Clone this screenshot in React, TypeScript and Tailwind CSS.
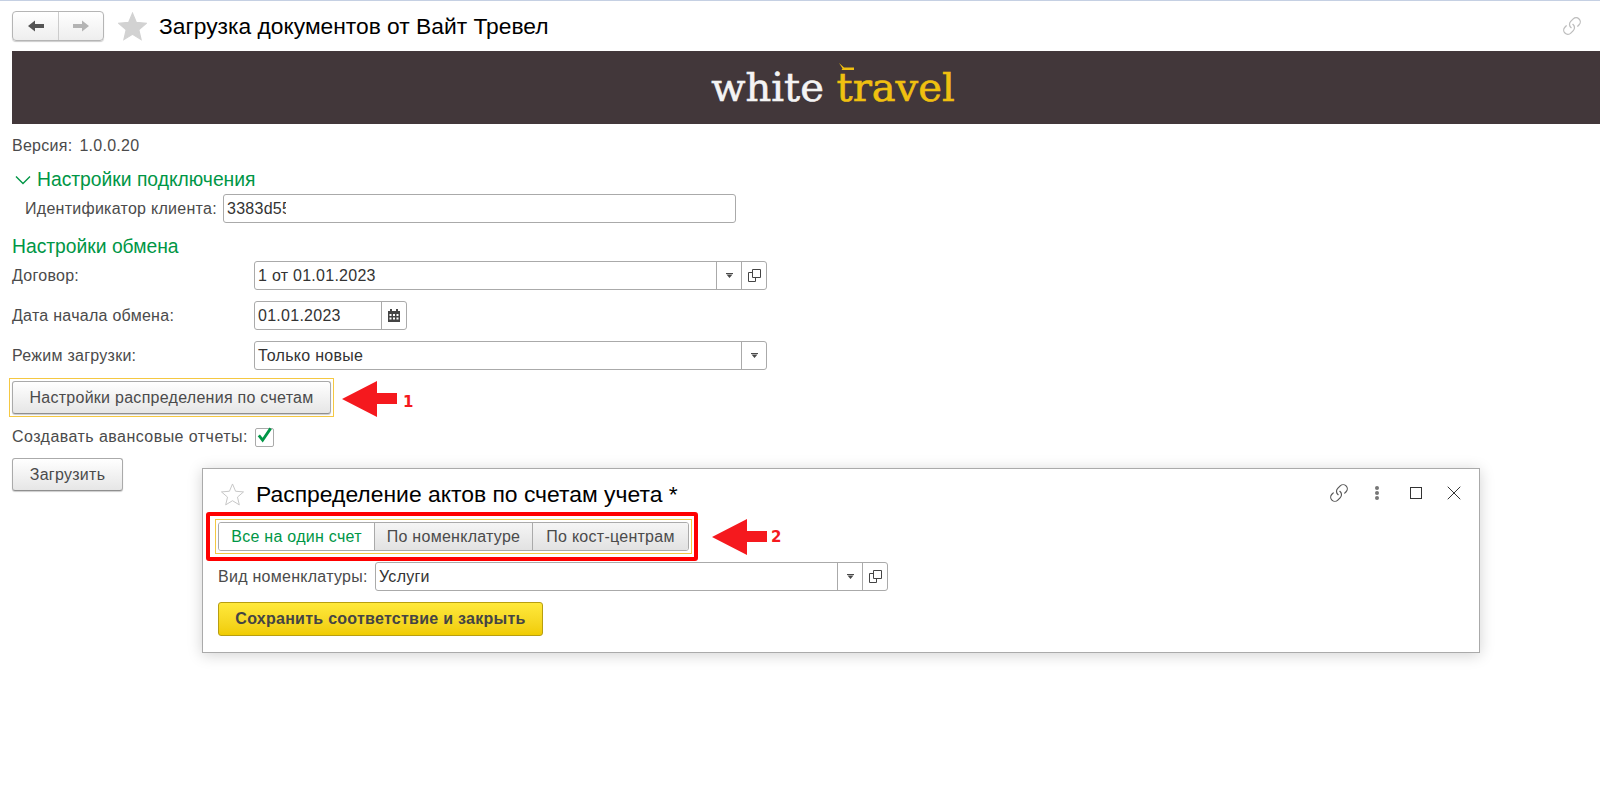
import { Link, X } from "lucide-react";

const font = { fontFamily: '"Liberation Sans", Arial, sans-serif' };

function Caret() {
  return (
    <svg width="7" height="6" viewBox="0 0 7 6">
      <path d="M0 0h7v1H0z M.5 1.5h6L3.5 5z" fill="#4a4a4a" />
    </svg>
  );
}

function CopyIcon() {
  return (
    <svg width="13" height="13" viewBox="0 0 13 13" fill="none" stroke="#444" strokeWidth="1">
      <path d="M4.5 .5h8v8h-8z" />
      <path d="M4.5 3.5H.5v9h7v-4" />
    </svg>
  );
}

function CalendarIcon() {
  return (
    <svg width="12" height="13" viewBox="0 0 12 13">
      <path d="M0 2h2V0h2v2h4V0h2v2h2v11H0z" fill="#444" />
      <path
        d="M1.5 5h2v2h-2z M5 5h2v2H5z M8.5 5h2v2h-2z M1.5 8.5h2v2h-2z M5 8.5h2v2H5z M8.5 8.5h2v2h-2z"
        fill="#fff"
      />
    </svg>
  );
}

function StarIcon({ size, filled }: { size: number; filled?: boolean }) {
  return (
    <svg width={size} height={size} viewBox="0 0 24 24">
      <path
        d="M12 1l3.2 7.6 8.3.7-6.3 5.4 1.9 8.1L12 18.5l-7.1 4.3 1.9-8.1L.5 9.3l8.3-.7z"
        fill={filled ? "#d2d2d2" : "#fff"}
        stroke={filled ? "#d2d2d2" : "#c4c4c4"}
        strokeWidth="1"
      />
    </svg>
  );
}

function BigArrow() {
  return (
    <svg width="55" height="36" viewBox="0 0 55 36" className="shrink-0">
      <path d="M0 18L35 0v12h20v11H35v13z" fill="#f5191e" />
    </svg>
  );
}

function FieldBtn({ children }: { children: React.ReactNode }) {
  return <span className="flex h-full w-[25px] items-center justify-center border-l border-[#aaaaaa]">{children}</span>;
}

function Field({ value, className, children }: { value: string; className: string; children?: React.ReactNode }) {
  return (
    <div className={`flex h-[29px] items-center rounded-[3px] border border-[#aaaaaa] bg-white ${className}`}>
      <span className="flex-1 overflow-hidden pl-[3px] text-[16px] tracking-[0.27px] whitespace-nowrap text-[#333]">{value}</span>
      {children}
    </div>
  );
}

function FormRow({ label, children }: { label: string; children: React.ReactNode }) {
  return (
    <div className="mb-[11px] flex items-center">
      <span className="w-[242px] pt-[1px] text-[16px] tracking-[0.27px] text-[#4b4b4b]">{label}</span>
      {children}
    </div>
  );
}

const grayBtn =
  "rounded-[3px] border border-[#aaaaaa] border-b-[#8f8f8f] bg-linear-to-b from-white to-[#e6e6e6] pt-[1px] text-[16px] tracking-[0.27px] text-[#4b4b4b] shadow-[0_1px_1px_rgba(0,0,0,0.2)]";

export default function App() {
  return (
    <div style={font} className="relative h-[800px] w-[1600px] overflow-hidden bg-white">
      <div className="h-[1px] bg-[#c5d0e3]" />

      <header className="flex h-[50px] items-center pr-[18px] pl-[12px]">
        <div className="flex h-[30px] w-[92px] rounded-[4px] border border-[#b5b5b5] bg-linear-to-b from-white to-[#eeeeee] shadow-[0_1px_1px_rgba(0,0,0,0.2)]">
          <span className="flex w-[46px] items-center justify-center border-r border-[#cccccc]">
            <svg width="16" height="12" viewBox="0 0 16 12">
              <path d="M0 6l7-5.5V4h9v4H7v3.5z" fill="#555" />
            </svg>
          </span>
          <span className="flex flex-1 items-center justify-center">
            <svg width="16" height="12" viewBox="0 0 16 12">
              <path d="M16 6L9 .5V4H0v4h9v3.5z" fill="#b4b4b4" />
            </svg>
          </span>
        </div>
        <span className="ml-[14px] flex w-[41px]">
          <StarIcon size={29} filled />
        </span>
        <h1 className="text-[22.8px] text-black">Загрузка документов от Вайт Тревел</h1>
        <Link size={20} strokeWidth={1.5} className="ml-auto text-[#bdbdbd]" style={{ transform: "scaleX(-1) rotate(90deg)" }} />
      </header>

      <main className="px-[12px]">
        <div className="-mr-[12px] flex h-[73px] items-center justify-center bg-[#42373a] pb-[2px] pl-[54px]">
          <span style={{ fontFamily: '"DejaVu Serif", serif' }} className="text-[40px] leading-none [-webkit-text-stroke:0.6px_currentColor]">
            <span className="text-[#f4f4f4]">white </span>
            <span className="relative text-[#f0c010]">
              travel
              <svg width="17" height="8" viewBox="0 0 17 8" className="absolute top-[-1px] left-[1px]">
                <path d="M1 0l5 4.5h10V7H3.5l1-1.5z" fill="#f0c010" />
              </svg>
            </span>
          </span>
        </div>

        <div className="mt-[10px] text-[16px] tracking-[0.27px] text-[#4b4b4b]">
          Версия:<span className="ml-[7px]">1.0.0.20</span>
        </div>

        <div className="mt-[11px] flex items-center text-[19.3px] leading-[22px] text-[#009646]">
          <svg width="16" height="10" viewBox="0 0 16 10" fill="none" stroke="#009646" strokeWidth="1.4" className="mx-[3px] mr-[6px]">
            <path d="M1 1.5l7 7 7-7" />
          </svg>
          Настройки подключения
        </div>
        <div className="mt-[3px] flex items-center pl-[13px]">
          <span className="w-[198px] text-[16px] tracking-[0.27px] text-[#4b4b4b]">Идентификатор клиента:</span>
          <div className="flex h-[29px] w-[513px] items-center rounded-[3px] border border-[#aaaaaa] bg-white pl-[3px]">
            <span className="w-[59px] overflow-hidden text-[16px] tracking-[0.27px] whitespace-nowrap text-[#333]">3383d55</span>
          </div>
        </div>

        <div className="mt-[13px] mb-[3px] text-[19.3px] leading-[22px] text-[#009646]">Настройки обмена</div>
        <FormRow label="Договор:">
          <Field value="1 от 01.01.2023" className="w-[513px]">
            <FieldBtn>
              <Caret />
            </FieldBtn>
            <FieldBtn>
              <CopyIcon />
            </FieldBtn>
          </Field>
        </FormRow>
        <FormRow label="Дата начала обмена:">
          <Field value="01.01.2023" className="w-[153px]">
            <FieldBtn>
              <CalendarIcon />
            </FieldBtn>
          </Field>
        </FormRow>
        <FormRow label="Режим загрузки:">
          <Field value="Только новые" className="w-[513px]">
            <FieldBtn>
              <Caret />
            </FieldBtn>
          </Field>
        </FormRow>

        <div className="mt-[-3px] -ml-[3px] flex items-center">
          <div className="border border-[#f5c842] p-[2px]">
            <button className={`h-[33px] w-[319px] ${grayBtn}`}>Настройки распределения по счетам</button>
          </div>
          <span className="mt-[3px] ml-[8px]">
            <BigArrow />
          </span>
          <span style={{ fontFamily: '"DejaVu Sans", sans-serif' }} className="mt-[9px] ml-[6px] text-[15px] font-bold text-[#f5191e]">
            1
          </span>
        </div>

        <div className="mt-[8px] flex items-center">
          <span className="text-[16px] tracking-[0.45px] text-[#4b4b4b]">Создавать авансовые отчеты:</span>
          <span className="ml-[7px] flex h-[19px] w-[19px] items-center justify-center rounded-[2px] border border-[#aaaaaa]">
            <svg width="18" height="18" viewBox="0 0 18 18" className="-mt-[4px]" fill="none" stroke="#009646" strokeWidth="3">
              <path d="M3 9.5l4 5L15.5 2" />
            </svg>
          </span>
        </div>

        <button className={`mt-[9px] h-[33px] w-[111px] ${grayBtn}`}>Загрузить</button>
      </main>

      <section className="absolute top-[468px] left-[202px] h-[185px] w-[1278px] border border-[#aaaaaa] bg-white pl-[3px] shadow-[0_2px_14px_rgba(0,0,0,0.18)]">
        <div className="flex h-[43px] items-center pt-[8px] pr-[13px] pl-[15px]">
          <span className="flex w-[35px]">
            <StarIcon size={23} />
          </span>
          <h2 className="text-[22.9px] text-black">Распределение актов по счетам учета *</h2>
          <div className="-mt-[4px] ml-auto flex items-center">
            <Link size={20} strokeWidth={1.4} className="text-[#555]" style={{ transform: "scaleX(-1) rotate(90deg)" }} />
            <span className="ml-[26px] flex w-[5px] flex-col gap-[1px]">
              <i className="h-[4px] w-[4px] rounded-full bg-[#777]" />
              <i className="h-[4px] w-[4px] rounded-full bg-[#777]" />
              <i className="h-[4px] w-[4px] rounded-full bg-[#777]" />
            </span>
            <span className="ml-[30px] h-[12px] w-[12px] border border-[#333]" />
            <X size={24} strokeWidth={1} className="ml-[20px] text-[#333]" />
          </div>
        </div>

        <div className="flex items-center">
          <div className="w-[492px] rounded-[3px] border-[4px] border-[#ff0000] py-[3px] pr-[2px] pl-[5px]">
            <div className="border border-[#f5c842] p-[2px]">
              <div className="flex h-[29px] overflow-hidden rounded-[3px] border border-[#aaaaaa] text-[16px] tracking-[0.27px]">
                <span className="flex w-[155px] items-center justify-center bg-white text-[#009646]">Все на один счет</span>
                <span className="flex w-[158px] items-center justify-center border-l border-[#aaaaaa] bg-linear-to-b from-[#f5f5f5] to-[#e2e2e2] text-[#4b4b4b]">
                  По номенклатуре
                </span>
                <span className="flex flex-1 items-center justify-center border-l border-[#aaaaaa] bg-linear-to-b from-[#f5f5f5] to-[#e2e2e2] text-[#4b4b4b]">
                  По кост-центрам
                </span>
              </div>
            </div>
          </div>
          <span className="ml-[14px]">
            <BigArrow />
          </span>
          <span style={{ fontFamily: '"DejaVu Sans", sans-serif' }} className="mt-[2px] ml-[4px] text-[15px] font-bold text-[#f5191e]">
            2
          </span>
        </div>

        <div className="mt-[1px] ml-[12px] flex items-center">
          <span className="w-[157px] text-[16px] tracking-[0.27px] text-[#4b4b4b]">Вид номенклатуры:</span>
          <Field value="Услуги" className="w-[513px]">
            <FieldBtn>
              <Caret />
            </FieldBtn>
            <FieldBtn>
              <CopyIcon />
            </FieldBtn>
          </Field>
        </div>

        <button className="mt-[11px] ml-[12px] h-[34px] w-[325px] rounded-[3px] border border-[#b89e10] bg-linear-to-b from-[#ffe93a] to-[#f0cc00] text-[16px] font-bold tracking-[0.27px] text-[#444]">
          Сохранить соответствие и закрыть
        </button>
      </section>
    </div>
  );
}
